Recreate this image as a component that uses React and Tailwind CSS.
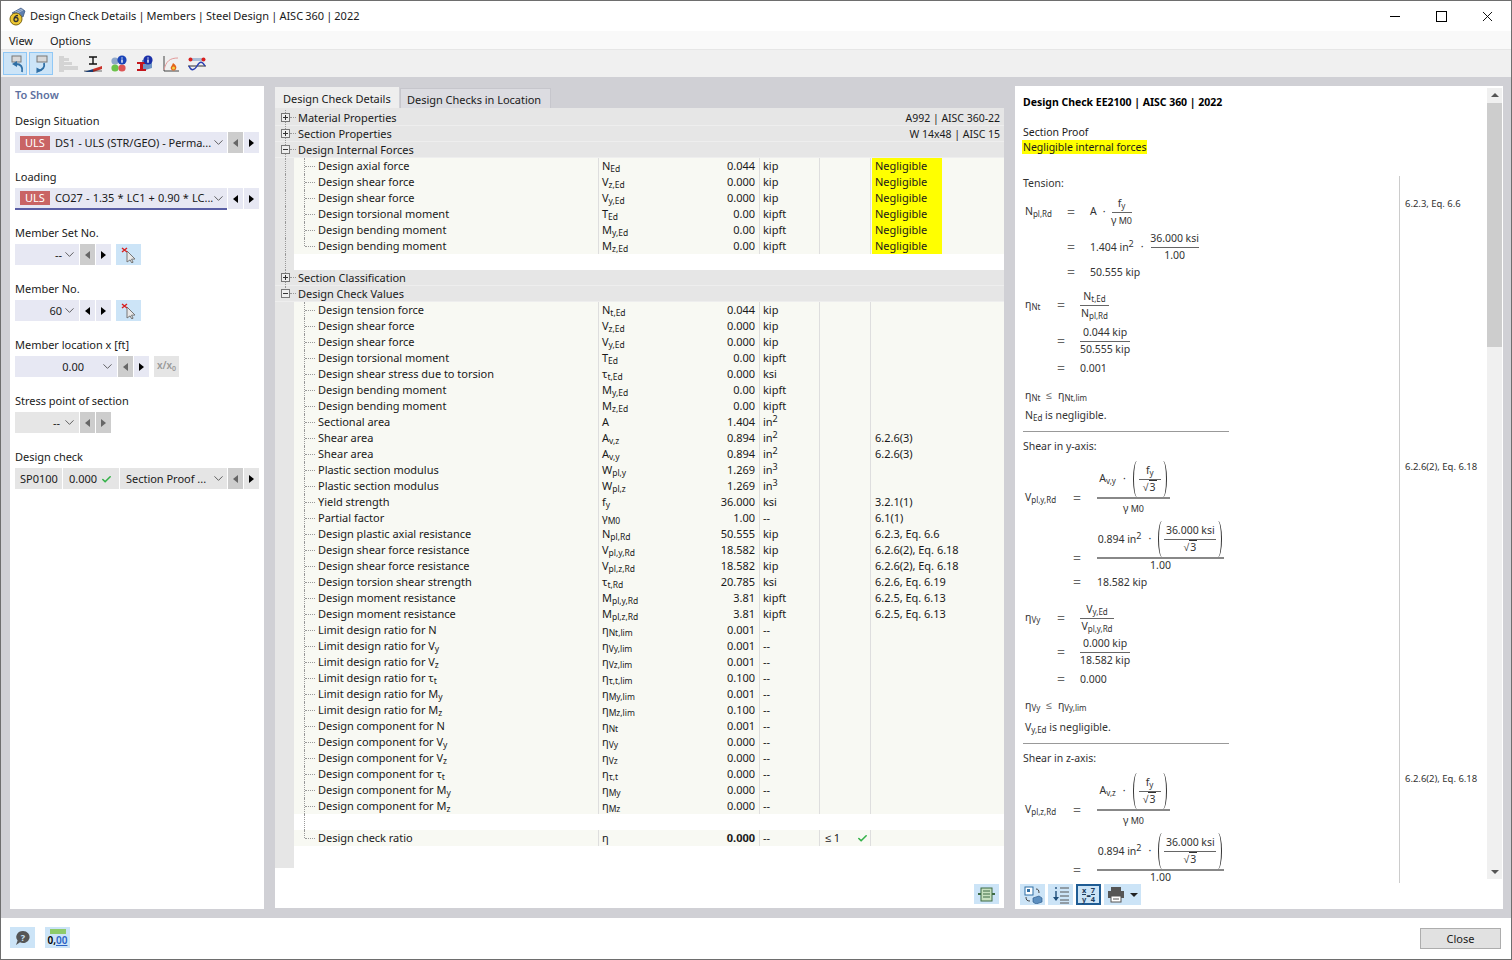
import React from "react";
import { X, ChevronDown, Check } from "lucide-react";

// text helper: "_x" is a subscript, "^x" a superscript
function T({ t, small }) {
  return (
    <span>
      {t.split(/([_^][^\s]+)/).map((p, i) => {
        if (p[0] === "_")
          return (
            <span key={i} className={`align-[-2px] leading-none ${small ? "text-[8px]" : "text-[8.5px]"}`}>
              {p.slice(1)}
            </span>
          );
        if (p[0] === "^") return <span key={i} className="text-[9px] align-[4px] leading-none">{p.slice(1)}</span>;
        return <span key={i}>{p}</span>;
      })}
    </span>
  );
}

const internalForces = [
  ["Design axial force", "N_Ed", "0.044", "kip"],
  ["Design shear force", "V_z,Ed", "0.000", "kip"],
  ["Design shear force", "V_y,Ed", "0.000", "kip"],
  ["Design torsional moment", "T_Ed", "0.00", "kipft"],
  ["Design bending moment", "M_y,Ed", "0.00", "kipft"],
  ["Design bending moment", "M_z,Ed", "0.00", "kipft"],
];

const checkValues = [
  ["Design tension force", "N_t,Ed", "0.044", "kip"],
  ["Design shear force", "V_z,Ed", "0.000", "kip"],
  ["Design shear force", "V_y,Ed", "0.000", "kip"],
  ["Design torsional moment", "T_Ed", "0.00", "kipft"],
  ["Design shear stress due to torsion", "τ_t,Ed", "0.000", "ksi"],
  ["Design bending moment", "M_y,Ed", "0.00", "kipft"],
  ["Design bending moment", "M_z,Ed", "0.00", "kipft"],
  ["Sectional area", "A", "1.404", "in^2"],
  ["Shear area", "A_v,z", "0.894", "in^2", "6.2.6(3)"],
  ["Shear area", "A_v,y", "0.894", "in^2", "6.2.6(3)"],
  ["Plastic section modulus", "W_pl,y", "1.269", "in^3"],
  ["Plastic section modulus", "W_pl,z", "1.269", "in^3"],
  ["Yield strength", "f_y", "36.000", "ksi", "3.2.1(1)"],
  ["Partial factor", "γ_M0", "1.00", "--", "6.1(1)"],
  ["Design plastic axial resistance", "N_pl,Rd", "50.555", "kip", "6.2.3, Eq. 6.6"],
  ["Design shear force resistance", "V_pl,y,Rd", "18.582", "kip", "6.2.6(2), Eq. 6.18"],
  ["Design shear force resistance", "V_pl,z,Rd", "18.582", "kip", "6.2.6(2), Eq. 6.18"],
  ["Design torsion shear strength", "τ_t,Rd", "20.785", "ksi", "6.2.6, Eq. 6.19"],
  ["Design moment resistance", "M_pl,y,Rd", "3.81", "kipft", "6.2.5, Eq. 6.13"],
  ["Design moment resistance", "M_pl,z,Rd", "3.81", "kipft", "6.2.5, Eq. 6.13"],
  ["Limit design ratio for N", "η_Nt,lim", "0.001", "--"],
  ["Limit design ratio for V_y", "η_Vy,lim", "0.001", "--"],
  ["Limit design ratio for V_z", "η_Vz,lim", "0.001", "--"],
  ["Limit design ratio for τ_t", "η_τ,t,lim", "0.100", "--"],
  ["Limit design ratio for M_y", "η_My,lim", "0.001", "--"],
  ["Limit design ratio for M_z", "η_Mz,lim", "0.100", "--"],
  ["Design component for N", "η_Nt", "0.001", "--"],
  ["Design component for V_y", "η_Vy", "0.000", "--"],
  ["Design component for V_z", "η_Vz", "0.000", "--"],
  ["Design component for τ_t", "η_τ,t", "0.000", "--"],
  ["Design component for M_y", "η_My", "0.000", "--"],
  ["Design component for M_z", "η_Mz", "0.000", "--"],
];

/* ---------- toolbar drawings ---------- */
function SelectBack() {
  return (
    <svg width="22" height="21" viewBox="0 0 22 21">
      <rect x="8" y="3" width="9" height="6" fill="#d8d8d8" stroke="#777" />
      <path d="M18 19c1-5-1-8-6-8" fill="none" stroke="#2f6fa5" strokeWidth="1.8" />
      <path d="M8 11l5-3v6z" fill="#2f6fa5" />
    </svg>
  );
}

function SelectNext() {
  return (
    <svg width="22" height="21" viewBox="0 0 22 21">
      <rect x="7" y="3" width="10" height="6" fill="#d8d8d8" stroke="#777" />
      <path d="M14 10c1 4-1 7-6 8" fill="none" stroke="#2f6fa5" strokeWidth="1.8" />
      <path d="M5 19l3-5 3 5z" fill="#2f6fa5" transform="rotate(-30 8 17)" />
    </svg>
  );
}

function ToolIcons() {
  return (
    <>
      <svg width="20" height="18" viewBox="0 0 20 18" className="ml-[2px]">
        <path d="M1 1h5v16H1zM6 3h5v3H6zM6 7h8v3H6zM6 11h14v4H6z" fill="#d4d4d4" />
      </svg>
      <svg width="18" height="18" viewBox="0 0 18 18" className="ml-[6px]">
        <path d="M5 2h8M9 2v7M5 9h8" stroke="#111" strokeWidth="1.4" fill="none" />
        <path d="M0 17l9-3v3z" fill="#1c4f9c" />
        <path d="M9 14l9-3v3l-9 3z" fill="#c8322b" />
        <path d="M0 16h18" stroke="#111" strokeWidth="0.6" />
      </svg>
      <svg width="18" height="18" viewBox="0 0 18 18" className="ml-[8px]">
        <circle cx="5" cy="6" r="3.6" fill="#8fa7c9" />
        <circle cx="5" cy="13" r="3.6" fill="#6cc24a" />
        <circle cx="12" cy="13" r="3.6" fill="#dd5555" />
        <circle cx="12" cy="5" r="4.6" fill="#1a44b8" />
        <path d="M12 2.4v1M12 4.6v3.2" stroke="#fff" strokeWidth="1.4" />
      </svg>
      <svg width="18" height="18" viewBox="0 0 18 18" className="ml-[8px]">
        <path d="M6 5l10-1v9l-10 3z" fill="#6f95c4" />
        <path d="M1 7h9v2H7v5h3v2H1v-2h3V9H1z" fill="#c4161c" />
        <circle cx="12" cy="5" r="4.6" fill="#1a2fa8" />
        <path d="M12 2.4v1M12 4.6v3.2" stroke="#fff" strokeWidth="1.4" />
      </svg>
      <svg width="18" height="18" viewBox="0 0 18 18" className="ml-[8px]">
        <path d="M2 1v15h15" stroke="#444" fill="none" />
        <path d="M2 15C4 6 8 3 16 3" stroke="#e39a9a" fill="none" />
        <path d="M11 8c3 2 4 4 3 6s-4 2-5 0 1-3 2-6z" fill="#e3641c" />
        <circle cx="11.5" cy="13" r="1.5" fill="#f4d03f" />
      </svg>
      <svg width="18" height="18" viewBox="0 0 18 18" className="ml-[8px]">
        <rect x="2" y="3" width="14" height="3" fill="#a9bdd6" />
        <circle cx="2.5" cy="4.5" r="2" fill="#d8201f" />
        <circle cx="15.5" cy="4.5" r="2" fill="#d8201f" />
        <path d="M0 11h18" stroke="#333" />
        <path d="M1 11c2 5 5 5 8 0s5-5 8 0" stroke="#2a3fb0" strokeWidth="1.4" fill="none" />
      </svg>
    </>
  );
}

function AppLogo() {
  return (
    <svg width="17" height="19" viewBox="0 0 17 19" className="mr-[4px]">
      <path d="M3 6l9-5 4 3-2 6z" fill="#5f7fae" stroke="#34507c" strokeWidth="0.7" />
      <path d="M6 5l7-3M8 6l6-3" stroke="#cfd8e6" strokeWidth="0.7" />
      <circle cx="7" cy="12" r="6" fill="#ecc632" stroke="#7a6412" />
      <path d="M9 8.5C6.500 8.500 5 10.500 5 12.500a2 2 0 1 0 4 0 2 2 0 0 0-4 0" fill="none" stroke="#333" strokeWidth="1.3" />
    </svg>
  );
}

function PickIcon() {
  return (
    <svg width="16" height="16" viewBox="0 0 16 16">
      <path d="M6 4l8 8-3.5.2 1.6 3-1.4.7-1.6-3L6 15z" fill="#e8e8e8" stroke="#777" />
      <path d="M1 1l5 4M6 1L1 5" stroke="#d8201f" strokeWidth="1.4" />
    </svg>
  );
}

/* ---------- left panel ---------- */
function Arrows({ leftOff, rightOff, bg = "bg-[#e7e8f3]" }) {
  return (
    <div className="flex gap-px ml-px">
      <div className={`w-[15px] h-[21px] flex items-center justify-center ${leftOff ? "bg-[#cdcdcd]" : bg}`}>
        <span className={`border-y-[4px] border-y-transparent border-r-[5px] ${leftOff ? "border-r-[#666]" : "border-r-black"}`} />
      </div>
      <div className={`w-[15px] h-[21px] flex items-center justify-center ${rightOff ? "bg-[#cdcdcd]" : bg}`}>
        <span className={`border-y-[4px] border-y-transparent border-l-[5px] ${rightOff ? "border-l-[#666]" : "border-l-black"}`} />
      </div>
    </div>
  );
}

function Chevron() {
  return <ChevronDown size={15} strokeWidth={1.2} className="text-[#333] shrink-0" />;
}

function Uls() {
  return <span className="w-[30px] h-[14px] bg-[#c96464] text-white text-center leading-[14px] shrink-0 mr-[5px]">ULS</span>;
}

function Group({ label, children }) {
  return (
    <div className="h-[56px]">
      <div className="h-[19px] leading-[15px] text-[11px] text-[#1a1a1a]">{label}</div>
      <div className="flex h-[21px]">{children}</div>
    </div>
  );
}

function LeftPanel() {
  return (
    <div className="w-[254px] h-[823px] bg-white pl-[5px] shrink-0">
      <div className="h-[18px] leading-[18px] font-semibold text-[#5d70a0]">To Show</div>
      <div className="h-[9px]" />
      <Group label="Design Situation">
        <div className="w-[212px] bg-[#e7e8f3] flex items-center pl-[5px] pr-[1px]">
          <Uls />
          <span className="w-[156px] shrink-0 whitespace-nowrap pt-px">DS1 - ULS (STR/GEO) - Perma...</span>
          <Chevron />
        </div>
        <Arrows leftOff />
      </Group>
      <Group label="Loading">
        <div className="w-[212px] h-[22px] bg-[#e7e8f3] flex items-center pl-[5px] pr-[1px] border-b-2 border-[#5a5fa5]">
          <Uls />
          <span className="w-[156px] shrink-0 whitespace-nowrap pt-px [word-spacing:0.3px]">CO27 - 1.35 * LC1 + 0.90 * LC...</span>
          <Chevron />
        </div>
        <Arrows />
      </Group>
      <Group label="Member Set No.">
        <div className="w-[64px] bg-[#e7e8f3] flex items-center justify-end pr-[2px]">
          <span className="pt-px">--</span>
          <Chevron />
        </div>
        <Arrows leftOff />
        <div className="w-[25px] ml-[5px] bg-[#cce4f7] flex items-center justify-center"><PickIcon /></div>
      </Group>
      <Group label="Member No.">
        <div className="w-[64px] bg-[#e7e8f3] flex items-center justify-end pr-[2px]">
          <span className="pt-px">60</span>
          <Chevron />
        </div>
        <Arrows />
        <div className="w-[25px] ml-[5px] bg-[#cce4f7] flex items-center justify-center"><PickIcon /></div>
      </Group>
      <Group label="Member location x [ft]">
        <div className="w-[102px] bg-[#e7e8f3] flex items-center pr-[2px]">
          <span className="flex-1 text-right pr-[16px] pt-px">0.00</span>
          <Chevron />
        </div>
        <Arrows leftOff />
        <div className="w-[25px] ml-[5px] bg-[#e5e5e5] flex items-center justify-center text-[10px] text-[#999] font-semibold">
          <span>x/x<span className="text-[7px] align-[-2px]">0</span></span>
        </div>
      </Group>
      <Group label="Stress point of section">
        <div className="w-[64px] bg-[#e6e6e6] flex items-center justify-end gap-[2px] pr-[2px]">
          <span className="pt-px">--</span>
          <Chevron />
        </div>
        <Arrows leftOff rightOff />
      </Group>
      <Group label="Design check">
        <div className="w-[212px] bg-[#e5e5e5] flex items-center pr-[1px]">
          <span className="w-[48px] pl-[5px] border-r border-white h-full leading-[22px] shrink-0">SP0100</span>
          <span className="flex items-center w-[57px] pl-[6px] pt-px border-r border-white h-full shrink-0">
            0.000
            <Check size={11} strokeWidth={3.5} className="text-[#35b24a] ml-[4px]" />
          </span>
          <span className="w-[91px] shrink-0 pl-[6px] pt-px whitespace-nowrap">Section Proof ...</span>
          <Chevron />
        </div>
        <Arrows leftOff bg="bg-[#e5e5e5]" />
      </Group>
    </div>
  );
}

/* ---------- middle table ---------- */
function Expander({ open }) {
  return (
    <span className="absolute left-[6px] top-[3px] w-[9px] h-[9px] border border-[#777] bg-[#eee] flex items-center justify-center">
      <span className="absolute w-[5px] h-px bg-[#333]" />
      {!open && <span className="absolute w-px h-[5px] bg-[#333]" />}
    </span>
  );
}

function HeaderRow({ label, right, open, last }) {
  return (
    <div className="flex h-[16px] leading-[16px] bg-[#e6e6e6] border-b border-[#eeeeee]">
      <div className="relative w-[19px] shrink-0">
        {!last && <span className="absolute left-[10px] top-0 h-full border-l border-dotted border-[#999]" />}
        {last && <span className="absolute left-[10px] top-0 h-[8px] border-l border-dotted border-[#999]" />}
        <span className="absolute left-[15px] top-[7px] w-[6px] border-t border-dotted border-[#999]" />
        <Expander open={open} />
      </div>
      <div className="flex-1 pl-[4px]">{label}</div>
      {right && <div className="pr-[4px] text-[10.5px]">{right}</div>}
    </div>
  );
}

function Cols({ sym, value, unit, mid, note, yellow, bold }) {
  return (
    <>
      <div className="w-[91px] h-full border-l border-[#dedede] pl-[3px] shrink-0"><T t={sym} /></div>
      <div className={`w-[70px] h-full text-right pr-[4px] shrink-0 ${bold ? "font-bold" : ""}`}>{value}</div>
      <div className="w-[60px] h-full border-l border-[#dedede] pl-[3px] shrink-0"><T t={unit} /></div>
      <div className="w-[51px] h-full border-l border-[#dedede] shrink-0">{mid}</div>
      <div className="flex-1 h-full border-l border-[#dedede] pl-px">
        {yellow ? <div className="w-[70px] h-full bg-[#ffff00] pl-[3px]">Negligible</div> : <div className="pl-[3px]">{note}</div>}
      </div>
    </>
  );
}

function ChildRow({ label, rootLine, lastChild, children }) {
  return (
    <div className="flex h-[16px] leading-[16px]">
      <div className="relative w-[19px] shrink-0 bg-[#e6e6e6]">
        {rootLine && <span className="absolute left-[10px] top-0 h-full border-l border-dotted border-[#999]" />}
      </div>
      <div className="flex flex-1 bg-[#f8f9f3]">
        <div className="relative w-[304px] pl-[24px] shrink-0">
          <span className={`absolute left-[10px] top-0 border-l border-dotted border-[#999] ${lastChild ? "h-[8px]" : "h-full"}`} />
          <span className="absolute left-[11px] top-[8px] w-[10px] border-t border-dotted border-[#999]" />
          <T t={label} />
        </div>
        {children}
      </div>
    </div>
  );
}

function BlankRow({ rootLine, treeLine }) {
  return (
    <div className="flex h-[16px]">
      <div className="relative w-[19px] shrink-0 bg-[#e6e6e6]">
        {rootLine && <span className="absolute left-[10px] top-0 h-full border-l border-dotted border-[#999]" />}
      </div>
      <div className="relative flex-1 bg-white">
        {treeLine && <span className="absolute left-[10px] top-0 h-full border-l border-dotted border-[#999]" />}
      </div>
    </div>
  );
}

function MiddlePanel() {
  return (
    <div className="w-[729px] h-[821px] mt-px flex flex-col shrink-0">
      <div className="flex h-[21px] items-end">
        <div className="w-[124px] h-[21px] bg-[#eeeeee] pl-[8px] leading-[23px]">Design Check Details</div>
        <div className="w-[151px] h-[20px] ml-px bg-[#dcdce1] border border-b-0 border-[#c6c6cc] pl-[6px] leading-[21px]">Design Checks in Location</div>
      </div>
      <div className="flex-1 bg-white flex flex-col">
        <div className="h-[2px] bg-[#e6e6e6]" />
        <HeaderRow label="Material Properties" right="A992 | AISC 360-22" />
        <HeaderRow label="Section Properties" right="W 14x48 | AISC 15" />
        <HeaderRow label="Design Internal Forces" open />
        {internalForces.map((r, i) => (
          <ChildRow key={i} label={r[0]} rootLine lastChild={i === internalForces.length - 1}>
            <Cols sym={r[1]} value={r[2]} unit={r[3]} yellow />
          </ChildRow>
        ))}
        <BlankRow rootLine />
        <HeaderRow label="Section Classification" />
        <HeaderRow label="Design Check Values" open last />
        {checkValues.map((r, i) => (
          <ChildRow key={i} label={r[0]}>
            <Cols sym={r[1]} value={r[2]} unit={r[3]} note={r[4]} />
          </ChildRow>
        ))}
        <BlankRow treeLine />
        <ChildRow label="Design check ratio" lastChild>
          <Cols
            sym="η"
            value="0.000"
            unit="--"
            bold
            mid={
              <div className="flex items-center h-full pl-[5px]">
                <span className="flex-1">≤ 1</span>
                <Check size={11} strokeWidth={3.5} className="text-[#35b24a] mr-[2px]" />
              </div>
            }
          />
        </ChildRow>
        <div className="w-[19px] h-[22px] bg-[#e6e6e6]" />
        <div className="flex justify-end pr-[5px] mt-[16px]">
          <div className="w-[25px] h-[20px] bg-[#cce4f7] flex items-center justify-center">
            <svg width="17" height="15" viewBox="0 0 17 15">
              <rect x="3" y="1" width="11" height="13" fill="#c7e0c0" stroke="#3d6b45" />
              <path d="M5 4h7M5 7h7M5 10h7" stroke="#3d6b45" />
              <path d="M0 7h3M14 7h3" stroke="#3d6b45" strokeWidth="2" />
            </svg>
          </div>
        </div>
      </div>
    </div>
  );
}

/* ---------- right formula document ---------- */
function Frac({ num, den, w, h = 16, thick }) {
  return (
    <div className="flex flex-col shrink-0" style={{ width: w }}>
      <div className="flex items-end justify-center whitespace-nowrap" style={{ height: h }}>{num}</div>
      <div className={thick ? "border-t-2 border-[#888]" : "border-t border-[#666]"} />
      <div className="flex items-start justify-center whitespace-nowrap" style={{ height: h }}>{den}</div>
    </div>
  );
}

function Eq({ h, label, w, gap, children, top = 0 }) {
  return (
    <div className="flex items-center whitespace-nowrap" style={{ height: h, marginTop: top }}>
      <div className="pl-[2px] shrink-0" style={{ width: w }}>{label && <T t={label} small />}</div>
      <div className="w-[18px] text-center shrink-0 text-[#666] text-[14px] leading-none">=</div>
      <div className="shrink-0" style={{ width: gap }} />
      {children}
    </div>
  );
}

function Val({ children }) {
  return <span className="mt-[2px]">{children}</span>;
}

function Paren({ right }) {
  return (
    <span
      className={`w-[8px] h-[36px] shrink-0 rounded-[50%] border-[#333] ${right ? "border-r-[1.5px] -ml-[2px]" : "border-l-[1.5px] -mr-[2px]"}`}
    />
  );
}

function Root3() {
  return (
    <span className="flex items-start">
      <span>√</span>
      <span className="border-t border-[#333] leading-[13px] px-px">3</span>
    </span>
  );
}

function ParenFrac({ lead, top, w }) {
  return (
    <div className="flex items-center h-[36px] pr-[1px]">
      <T t={lead} small />
      <span className="mx-[7px]">·</span>
      <Paren />
      <Frac w={w} h={15} num={<T t={top} small />} den={<Root3 />} />
      <Paren right />
    </div>
  );
}

function Line({ h, children, top = 0 }) {
  return (
    <div className="flex items-center pl-[2px] whitespace-nowrap" style={{ height: h, marginTop: top }}>
      {children}
    </div>
  );
}

function ShearSection({ axis, title, note }) {
  const A = axis === "y" ? "A_v,y" : "A_v,z";
  const V = axis === "y" ? "V_pl,y,Rd" : "V_pl,z,Rd";
  const Ed = axis === "y" ? "V_y,Ed" : "V_z,Ed";
  const eta = axis === "y" ? "Vy" : "Vz";
  return (
    <div className="flex h-[312px]">
      <div className="w-[206px] shrink-0 border-b border-[#999] h-[312px]">
        <div className="h-[28px] leading-[28px]">{title}</div>
        <Eq h={76} label={V} w="45px" gap="11px">
          <Frac w="73px" h={37} thick num={<ParenFrac lead={A} top="f_y" w="22px" />} den={<span className="mt-[2px]">γ<span className="text-[9px]"> M0</span></span>} />
        </Eq>
        <Eq h={36} w="45px" gap="11px" top={4}>
          <Frac w="127px" h={37} thick num={<ParenFrac lead="0.894 in^2" top="36.000 ksi" w="52px" />} den={<span className="-mt-[1px]">1.00</span>} />
        </Eq>
        <Eq h={12} w="45px" gap="11px"><Val>18.582 kip</Val></Eq>
        <Eq h={44} label={"η_" + eta} w="29px" gap="10px" top={8}>
          <Frac w="34px" num={<T t={Ed} small />} den={<T t={V} small />} />
        </Eq>
        <Eq h={24} w="29px" gap="10px">
          <Frac w="50px" num="0.000 kip" den="18.582 kip" />
        </Eq>
        <Eq h={30} w="29px" gap="10px"><Val>0.000</Val></Eq>
        <Line h={24}>
          <T t={"η_" + eta} small /><span className="mx-[6px] text-[#666]">≤</span><T t={"η_" + eta + ",lim"} small />
        </Line>
        <Line h={18} top={1}>
          <T t={Ed} small />&nbsp;is negligible.
        </Line>
      </div>
      <div className="w-[170px] shrink-0" />
      <div className="flex-1 border-l border-[#ccc] pl-[5px] pt-[28px] text-[9.5px] h-[312px]">{note}</div>
    </div>
  );
}

function RightPanel() {
  return (
    <div className="w-[488px] h-[823px] bg-white flex flex-col shrink-0">
      <div className="flex h-[797px]">
        <div className="flex-1 overflow-hidden pl-[8px] text-[10.5px] text-[#333]">
          <div className="h-[90px] text-[#1a1a1a]">
            <div className="h-[32px] leading-[32px] font-bold text-[10.5px] text-black">Design Check EE2100 | AISC 360 | 2022</div>
            <div className="mt-[7px] leading-[15px]">Section Proof</div>
            <div className="inline-block bg-[#ffff00] leading-[14px] px-px -ml-px">Negligible internal forces</div>
          </div>
          <div className="flex h-[256px]">
            <div className="w-[206px] shrink-0 border-b border-[#999] h-[256px]">
              <div className="h-[14px] leading-[14px]">Tension:</div>
              <Eq h={44} label="N_pl,Rd" w="39px" gap="10px">
                <span>A</span>
                <span className="mx-[6px]">·</span>
                <Frac w="20px" num={<T t="f_y" small />} den={<span>γ<span className="text-[9px]"> M0</span></span>} />
              </Eq>
              <Eq h={26} w="39px" gap="10px">
                <T t="1.404 in^2" />
                <span className="mx-[7px]">·</span>
                <Frac w="48px" num="36.000 ksi" den="1.00" />
              </Eq>
              <Eq h={24} w="39px" gap="10px"><Val>50.555 kip</Val></Eq>
              <Eq h={42} label="η_Nt" w="29px" gap="10px">
                <Frac w="29px" num={<T t="N_t,Ed" small />} den={<T t="N_pl,Rd" small />} />
              </Eq>
              <Eq h={30} w="29px" gap="10px">
                <Frac w="50px" num="0.044 kip" den="50.555 kip" />
              </Eq>
              <Eq h={24} w="29px" gap="10px"><Val>0.001</Val></Eq>
              <Line h={26} top={3}>
                <T t="η_Nt" small /><span className="mx-[6px] text-[#666]">≤</span><T t="η_Nt,lim" small />
              </Line>
              <Line h={12} top={1}>
                <T t="N_Ed" small />&nbsp;is negligible.
              </Line>
            </div>
            <div className="w-[170px] shrink-0" />
            <div className="flex-1 border-l border-[#ccc] pl-[5px] pt-[21px] text-[9.5px]">6.2.3, Eq. 6.6</div>
          </div>
          <ShearSection axis="y" title="Shear in y-axis:" note="6.2.6(2), Eq. 6.18" />
          <ShearSection axis="z" title="Shear in z-axis:" note="6.2.6(2), Eq. 6.18" />
        </div>
        <div className="w-[15px] mr-px mt-[2px] h-[791px] bg-[#f0f0f0] flex flex-col items-center shrink-0">
          <div className="h-[14px] flex items-center">
            <span className="border-x-[4px] border-x-transparent border-b-[4px] border-b-[#555]" />
          </div>
          <div className="w-full h-[244px] mt-px bg-[#cdcdcd]" />
          <div className="flex-1" />
          <div className="h-[14px] flex items-center">
            <span className="border-x-[4px] border-x-transparent border-t-[4px] border-t-[#555]" />
          </div>
        </div>
      </div>
      <div className="flex gap-[3px] pl-[5px] pt-px">
        <div className="w-[25px] h-[21px] bg-[#cce4f7] flex items-center justify-center">
          <svg width="20" height="18" viewBox="0 0 20 18">
            <rect x="2" y="1" width="8" height="8" fill="#fff" stroke="#2f6fa5" />
            <rect x="4" y="3" width="3" height="3" fill="#2f6fa5" />
            <path d="M10 12l6-2 3 2v4l-6 2-3-2z" fill="#5d8fc0" stroke="#2f5f90" strokeWidth="0.7" />
            <path d="M13 3c2 0 3 1 3 4M3 11c0 3 1 4 4 4" stroke="#444" fill="none" />
          </svg>
        </div>
        <div className="w-[25px] h-[21px] bg-[#cce4f7] flex items-center justify-center">
          <svg width="18" height="18" viewBox="0 0 18 18">
            <path d="M8 2h9M8 6h9M8 10h9M8 14h9M8 17h9" stroke="#555" />
            <path d="M4 1v2M4 5v9" stroke="#1f4e79" strokeWidth="1.4" />
            <path d="M1 11h6l-3 4z" fill="#1f4e79" />
          </svg>
        </div>
        <div className="w-[25px] h-[21px] bg-[#cce4f7] border-2 border-[#1f5c94] flex items-center justify-center text-[7.5px] font-bold leading-[8px] text-[#1f3f60]">
          <span className="flex flex-col items-center"><span>x</span><span className="border-t border-[#1f3f60]">y</span></span>
          <span>=</span>
          <span className="flex flex-col items-center"><span>7</span><span className="border-t border-[#1f3f60]">4</span></span>
        </div>
        <div className="w-[37px] h-[21px] bg-[#cce4f7] flex items-center pl-[3px] gap-[5px]">
          <svg width="18" height="17" viewBox="0 0 18 17">
            <rect x="4" y="1" width="10" height="4" fill="#555" />
            <rect x="1" y="5" width="16" height="7" fill="#555" />
            <rect x="4" y="10" width="10" height="6" fill="#fff" stroke="#555" />
            <path d="M6 13h6" stroke="#555" />
          </svg>
          <span className="border-x-[4px] border-x-transparent border-t-[4px] border-t-[#222]" />
        </div>
      </div>
    </div>
  );
}

export default function App() {
  return (
    <div className="w-[1512px] h-[960px] overflow-hidden flex flex-col border border-[#6e6e6e] bg-white text-[11px] tracking-[-0.02px] text-[#1a1a1a] font-['Noto_Sans',sans-serif]">
      {/* Title bar */}
      <div className="h-[30px] shrink-0 flex items-center pl-[8px] bg-white">
        <AppLogo />
        <span className="text-[11px] [word-spacing:-0.7px]">Design Check Details | Members | Steel Design | AISC 360 | 2022</span>
        <div className="flex items-center ml-auto pr-[1px]">
          <div className="w-[46px] flex justify-center"><span className="w-[10px] h-px bg-black" /></div>
          <div className="w-[46px] flex justify-center"><span className="w-[11px] h-[11px] border border-black" /></div>
          <div className="w-[46px] flex justify-center"><X size={17} strokeWidth={1.3} className="text-black" /></div>
        </div>
      </div>
      {/* Menu */}
      <div className="h-[19px] shrink-0 flex items-center gap-[17px] pl-[8px] pt-[2px] bg-[#f9f9f9] border-b border-[#e6e6e6]">
        <span>View</span>
        <span>Options</span>
      </div>
      {/* Toolbar */}
      <div className="h-[27px] shrink-0 flex items-center pl-[2px] gap-[2px] bg-[#f0f0f0]">
        <div className="w-[24px] h-[23px] bg-[#cce4f7] border border-[#90c8f6]"><SelectBack /></div>
        <div className="w-[24px] h-[23px] bg-[#cce4f7] border border-[#90c8f6]"><SelectNext /></div>
        <div className="flex items-center pl-[1px]"><ToolIcons /></div>
      </div>
      {/* Main */}
      <div className="h-[841px] shrink-0 flex items-start gap-[11px] pl-[9px] pt-[9px] bg-[#d0d0d5]">
        <LeftPanel />
        <MiddlePanel />
        <RightPanel />
      </div>
      {/* Footer */}
      <div className="flex-1 flex items-center pl-[9px] pr-[10px] bg-white">
        <div className="w-[25px] h-[21px] -mt-[2px] bg-[#cce4f7] flex items-center justify-center">
          <svg width="16" height="16" viewBox="0 0 16 16">
            <path d="M8 1a6.500 6 0 1 1-3 11.300L1 15l1.600-4.400A6.500 6 0 0 1 8 1z" fill="#555" />
            <text x="8" y="11" textAnchor="middle" fontSize="9" fontWeight="700" fill="#cce4f7" fontFamily="Noto Sans">?</text>
          </svg>
        </div>
        <div className="w-[25px] h-[21px] -mt-[2px] ml-[10px] bg-[#cce4f7] flex flex-col items-center pt-[2px]">
          <span className="w-[16px] h-[5px] shrink-0 bg-[#8ecb6a]" />
          <span className="text-[10px] leading-[12px] font-semibold text-black">0,<span className="text-[#2a62c4] underline">00</span></span>
        </div>
        <div className="ml-auto w-[81px] h-[21px] bg-[#e1e1e1] border border-[#adadad] text-center leading-[19px]">Close</div>
      </div>
    </div>
  );
}
